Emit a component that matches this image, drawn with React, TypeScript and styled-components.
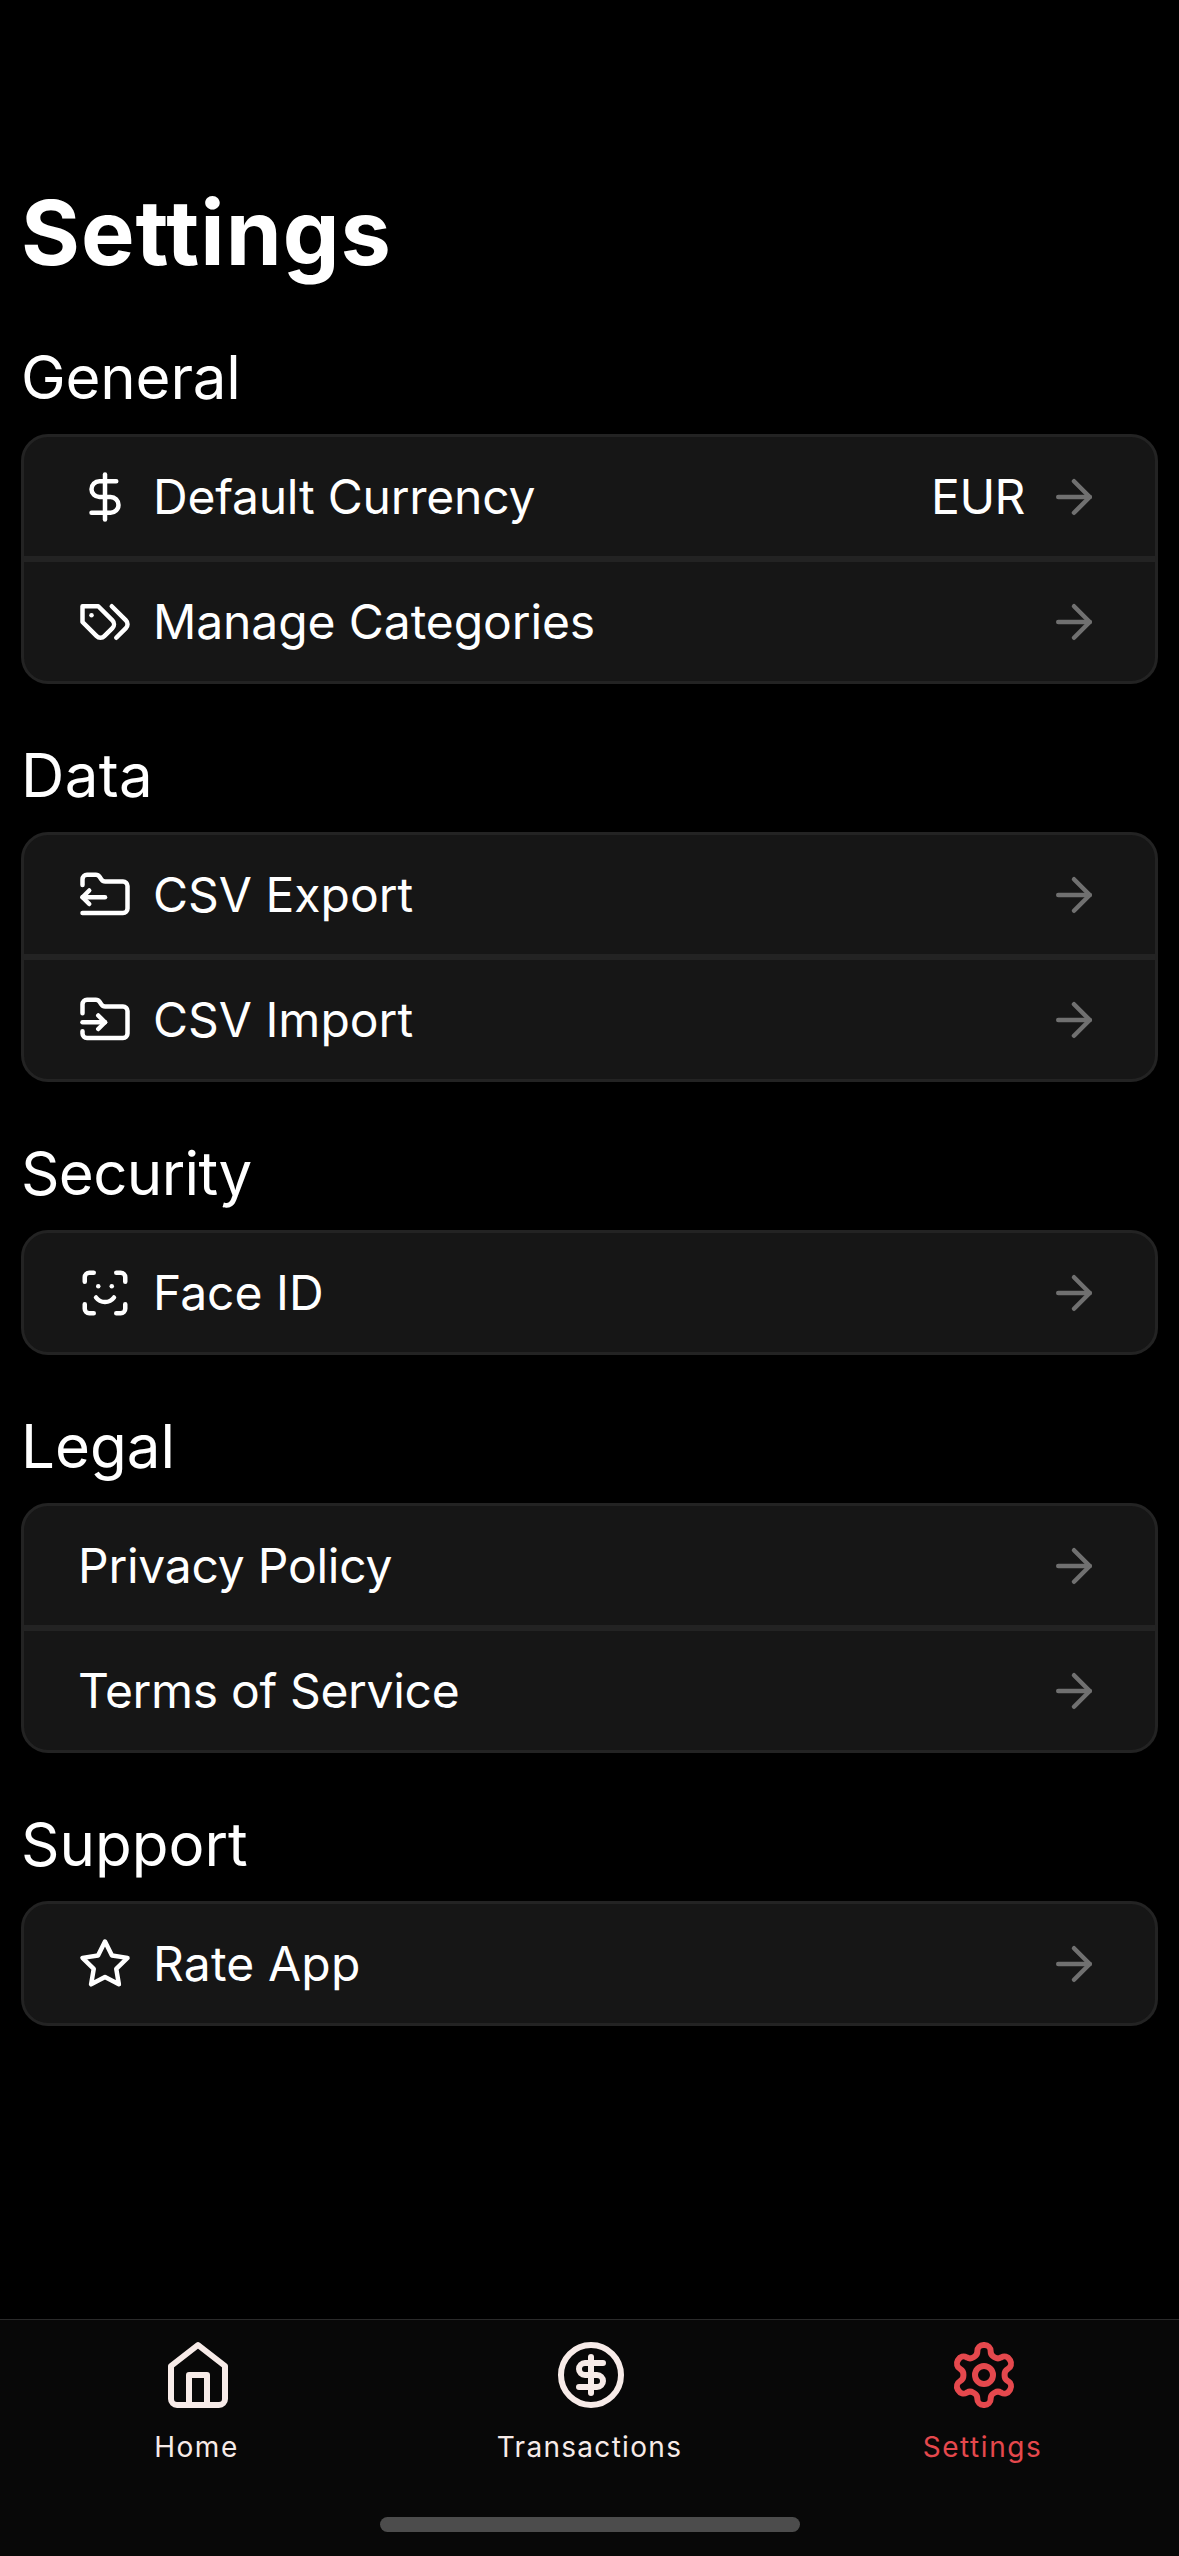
import React from "react";
import styled, { createGlobalStyle } from "styled-components";

const GlobalStyle = createGlobalStyle`
  * { box-sizing: border-box; }
  body { margin: 0; background: #000; }
`;

const Screen = styled.div`
  width: 1179px;
  height: 2556px;
  display: flex;
  flex-direction: column;
  background: #000;
  color: #fff;
  font-family: Inter, "Liberation Sans", sans-serif;
  overflow: hidden;
`;

const Content = styled.main`
  flex: 1;
  padding: 178px 21px 0;
`;

const Title = styled.h1`
  margin: 0;
  height: 108px;
  line-height: 110px;
  font-size: 90px;
  font-weight: 700;
  letter-spacing: 1px;
`;

const Section = styled.section`
  padding-top: 55px;
`;

const Heading = styled.h2<{ $tracking?: number }>`
  margin: 0 0 21px;
  height: 72px;
  line-height: 72px;
  font-size: 60px;
  font-weight: 400;
  letter-spacing: ${(p) => p.$tracking ?? 0}px;
`;

const Card = styled.div`
  border: 3px solid #232323;
  border-radius: 27px;
  background: #161616;
  overflow: hidden;
`;

const Row = styled.div`
  height: 119px;
  padding: 0 54px;
  display: flex;
  align-items: center;
  gap: 21px;
  font-size: 48px;
  line-height: 60px;
  & + & {
    height: 125px;
    border-top: 6px solid #232323;
  }
`;

const Label = styled.span<{ $tracking?: number }>`
  flex: 1;
  letter-spacing: ${(p) => p.$tracking ?? 0}px;
`;

const Value = styled.span`
  letter-spacing: -0.5px;
  padding-right: 1px;
`;

const Glyph = styled.svg`
  display: block;
  flex: none;
  fill: none;
  stroke: currentColor;
  stroke-width: 2;
  stroke-linecap: round;
  stroke-linejoin: round;
`;

const RowGlyph = styled(Glyph)<{ $muted?: boolean }>`
  width: 54px;
  height: 54px;
  margin-top: 1px;
  color: ${(p) => (p.$muted ? "#707070" : "#fff")};
`;

const TabGlyph = styled(Glyph)`
  width: 72px;
  height: 72px;
  margin-left: 3px;
`;

const TabBar = styled.nav`
  height: 237px;
  display: flex;
  flex-direction: column;
  align-items: center;
  background: #080808;
  border-top: 1px solid #2a2a2a;
`;

const Tabs = styled.div`
  width: 100%;
  display: grid;
  grid-template-columns: repeat(3, 1fr);
  height: 197px;
`;

const Tab = styled.div<{ $active?: boolean }>`
  display: flex;
  flex-direction: column;
  align-items: center;
  padding-top: 19px;
  gap: 18px;
  color: ${(p) => (p.$active ? "#e5484d" : "#f7ebe8")};
  font-size: 28px;
  line-height: 37px;
`;

const TabLabel = styled.span<{ $tracking: number }>`
  letter-spacing: ${(p) => p.$tracking}px;
`;

const HomeIndicator = styled.div`
  width: 420px;
  height: 15px;
  border-radius: 8px;
  background: #4c4c4c;
`;

const paths = {
  dollar: ["M12 2v20", "M17 5H9.5a3.5 3.5 0 0 0 0 7h5a3.5 3.5 0 0 1 0 7H6"],
  tags: [
    "M9 5H2v7l6.29 6.29c.94.94 2.48.94 3.42 0l3.58-3.58c.94-.94.94-2.48 0-3.42L9 5Z",
    "M6 9.01V9",
    "m15 5 6.3 6.3a2.4 2.4 0 0 1 0 3.4L17 19",
  ],
  folderOut: [
    "M2 7.5V5c0-1.1.9-2 2-2h3.93a2 2 0 0 1 1.66.9l.82 1.2a2 2 0 0 0 1.66.9H20a2 2 0 0 1 2 2v10a2 2 0 0 1-2 2H2",
    "M2 13h10",
    "m5 10-3 3 3 3",
  ],
  folderIn: [
    "M2 9V5c0-1.1.9-2 2-2h3.93a2 2 0 0 1 1.66.9l.82 1.2a2 2 0 0 0 1.66.9H20a2 2 0 0 1 2 2v10a2 2 0 0 1-2 2H4a2 2 0 0 1-2-2v-1",
    "M2 13h10",
    "m9 16 3-3-3-3",
  ],
  face: [
    "M3 7V5a2 2 0 0 1 2-2h2",
    "M17 3h2a2 2 0 0 1 2 2v2",
    "M21 17v2a2 2 0 0 1-2 2h-2",
    "M7 21H5a2 2 0 0 1-2-2v-2",
    "M8 14s1.5 2 4 2 4-2 4-2",
    "M9 9h.01",
    "M15 9h.01",
  ],
  star: ["M12 2l3.09 6.26L22 9.27l-5 4.87 1.18 6.88L12 17.77l-6.18 3.25L7 14.14 2 9.27l6.91-1.01z"],
  arrow: ["M5 12h14", "m12 5 7 7-7 7"],
  home: ["m3 9 9-7 9 7v11a2 2 0 0 1-2 2H5a2 2 0 0 1-2-2z", "M9 22V12h6v10"],
  coin: [
    "M12 2a10 10 0 1 0 0 20a10 10 0 1 0 0-20z",
    "M16 8h-6a2 2 0 1 0 0 4h4a2 2 0 1 1 0 4H8",
    "M12 18V6",
  ],
  gear: [
    "M12.22 2h-.44a2 2 0 0 0-2 2v.18a2 2 0 0 1-1 1.73l-.43.25a2 2 0 0 1-2 0l-.15-.08a2 2 0 0 0-2.73.73l-.22.38a2 2 0 0 0 .73 2.73l.15.1a2 2 0 0 1 1 1.72v.51a2 2 0 0 1-1 1.74l-.15.09a2 2 0 0 0-.73 2.73l.22.38a2 2 0 0 0 2.73.73l.15-.08a2 2 0 0 1 2 0l.43.25a2 2 0 0 1 1 1.73V20a2 2 0 0 0 2 2h.44a2 2 0 0 0 2-2v-.18a2 2 0 0 1 1-1.73l.43-.25a2 2 0 0 1 2 0l.15.08a2 2 0 0 0 2.73-.73l.22-.39a2 2 0 0 0-.73-2.73l-.15-.08a2 2 0 0 1-1-1.74v-.5a2 2 0 0 1 1-1.74l.15-.09a2 2 0 0 0 .73-2.73l-.22-.38a2 2 0 0 0-2.73-.73l-.15.08a2 2 0 0 1-2 0l-.43-.25a2 2 0 0 1-1-1.73V4a2 2 0 0 0-2-2z",
    "M12 9a3 3 0 1 0 0 6a3 3 0 1 0 0-6z",
  ],
};

type IconName = keyof typeof paths;

function Strokes({ name }: { name: IconName }) {
  return (
    <>
      {paths[name].map((d) => (
        <path key={d} d={d} />
      ))}
    </>
  );
}

function RowIcon({ name, muted }: { name: IconName; muted?: boolean }) {
  return (
    <RowGlyph viewBox="0 0 24 24" $muted={muted} aria-hidden>
      <Strokes name={name} />
    </RowGlyph>
  );
}

type Item = { label: string; icon?: IconName; value?: string; tracking?: number };

const sections: { title: string; tracking?: number; items: Item[] }[] = [
  {
    title: "General",
    tracking: -0.2,
    items: [
      { label: "Default Currency", icon: "dollar", value: "EUR", tracking: -0.23 },
      { label: "Manage Categories", icon: "tags", tracking: -0.1 },
    ],
  },
  {
    title: "Data",
    tracking: 0.4,
    items: [
      { label: "CSV Export", icon: "folderOut" },
      { label: "CSV Import", icon: "folderIn" },
    ],
  },
  { title: "Security", tracking: -0.65, items: [{ label: "Face ID", icon: "face" }] },
  {
    title: "Legal",
    items: [
      { label: "Privacy Policy", tracking: -0.25 },
      { label: "Terms of Service", tracking: -0.33 },
    ],
  },
  { title: "Support", items: [{ label: "Rate App", icon: "star", tracking: 0.15 }] },
];

const tabs: { label: string; icon: IconName; active?: boolean; tracking: number }[] = [
  { label: "Home", icon: "home", tracking: 1.5 },
  { label: "Transactions", icon: "coin", tracking: 1.3 },
  { label: "Settings", icon: "gear", active: true, tracking: 1.55 },
];

export default function App() {
  return (
    <Screen>
      <GlobalStyle />
      <Content>
        <Title>Settings</Title>
        {sections.map((s) => (
          <Section key={s.title}>
            <Heading $tracking={s.tracking}>{s.title}</Heading>
            <Card>
              {s.items.map((item) => (
                <Row key={item.label}>
                  {item.icon && <RowIcon name={item.icon} />}
                  <Label $tracking={item.tracking}>{item.label}</Label>
                  {item.value && <Value>{item.value}</Value>}
                  <RowIcon name="arrow" muted />
                </Row>
              ))}
            </Card>
          </Section>
        ))}
      </Content>
      <TabBar>
        <Tabs>
          {tabs.map((t) => (
            <Tab key={t.label} $active={t.active}>
              <TabGlyph viewBox="0 0 24 24" aria-hidden>
                <Strokes name={t.icon} />
              </TabGlyph>
              <TabLabel $tracking={t.tracking}>{t.label}</TabLabel>
            </Tab>
          ))}
        </Tabs>
        <HomeIndicator />
      </TabBar>
    </Screen>
  );
}
